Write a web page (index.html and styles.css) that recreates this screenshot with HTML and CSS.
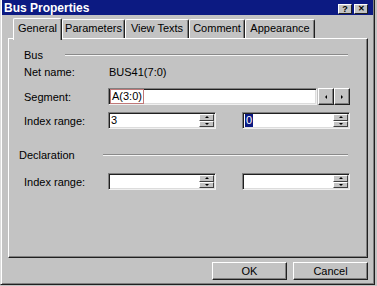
FILE: index.html
```html
<!DOCTYPE html>
<html lang="en">

<head>
    <meta charset="UTF-8">
    <title>Bus Properties</title>
    <link rel="stylesheet" href="styles.css">
</head>

<body>
    <div class="window">
        <div class="titlebar">
            <span class="title">Bus Properties</span>
            <div class="caption-buttons">
                <span class="caption-btn">?</span>
                <span class="caption-btn close">&#x2715;</span>
            </div>
        </div>

        <div class="content">
            <div class="tabs">
                <div class="tab active w-general">General</div>
                <div class="tab w-params">Parameters</div>
                <div class="tab w-texts">View Texts</div>
                <div class="tab w-comment">Comment</div>
                <div class="tab w-appear">Appearance</div>
            </div>

            <div class="panel">
                <div class="group group-bus">
                    <span>Bus</span>
                    <div class="etch"></div>
                </div>

                <div class="row row-net">
                    <span class="label">Net name:</span>
                    <span class="value">BUS41(7:0)</span>
                </div>

                <div class="row row-segment">
                    <span class="label">Segment:</span>
                    <div class="field field-wide"><span class="focus">A(3:0)</span></div>
                    <div class="arrow-btn"><span class="tri tri-left"></span></div>
                    <div class="arrow-btn"><span class="tri tri-right"></span></div>
                </div>

                <div class="row row-index">
                    <span class="label">Index range:</span>
                    <div class="field field-spin">
                        <span class="text">3</span>
                        <div class="spin"><span class="spin-up"></span><span class="spin-down"></span></div>
                    </div>
                    <div class="field field-spin second">
                        <span class="text selected">0</span>
                        <div class="spin"><span class="spin-up"></span><span class="spin-down"></span></div>
                    </div>
                </div>

                <div class="group group-decl">
                    <span>Declaration</span>
                    <div class="etch"></div>
                </div>

                <div class="row row-index2">
                    <span class="label">Index range:</span>
                    <div class="field field-spin">
                        <span class="text"></span>
                        <div class="spin"><span class="spin-up"></span><span class="spin-down"></span></div>
                    </div>
                    <div class="field field-spin second">
                        <span class="text"></span>
                        <div class="spin"><span class="spin-up"></span><span class="spin-down"></span></div>
                    </div>
                </div>
            </div>

            <div class="actions">
                <button class="btn">OK</button>
                <button class="btn">Cancel</button>
            </div>
        </div>
    </div>
</body>

</html>
```

FILE: styles.css
```css
* {
    margin: 0;
    padding: 0;
    box-sizing: border-box;
    font-family: 'Liberation Sans', Arial, sans-serif;
}

body {
    width: 377px;
    height: 286px;
    background: #c3c3c3;
    overflow: hidden;
}

/* outer dialog frame */
.window {
    width: 375px;
    height: 285px;
    background: #c3c3c3;
    border-left: 1px solid #dcdcdc;
    border-right: 1px solid #202020;
    border-bottom: 1px solid #202020;
    box-shadow: inset 1px 0 #fff, inset -1px -1px #808080;
    padding: 0 1px;
}

.titlebar {
    height: 15px;
    background: #0c1a82;
    display: flex;
    align-items: center;
    justify-content: space-between;
    padding: 0 5px 0 2px;
}

.title {
    color: #fff;
    font-weight: bold;
    font-size: 12px;
}

.caption-buttons {
    display: flex;
    gap: 2px;
    margin-top: 2px;
}

.caption-btn {
    width: 14px;
    height: 10px;
    background: #c3c3c3;
    border: 1px solid;
    border-color: #fff #202020 #202020 #fff;
    font-size: 9px;
    font-weight: bold;
    line-height: 8px;
    text-align: center;
    color: #000;
}

.caption-btn.close {
    font-size: 8px;
}

.content {
    padding: 0 5px 0 6px;
}

/* tab strip */
.tabs {
    display: flex;
    height: 23px;
    align-items: flex-end;
    padding-left: 5px;
    position: relative;
    z-index: 1;
}

.tab {
    height: 19px;
    font-size: 11px;
    line-height: 17px;
    text-align: center;
    color: #000;
    border-top: 1px solid #fff;
    border-left: 1px solid #fff;
    border-right: 1px solid #202020;
    box-shadow: inset -1px 0 #808080;
    border-radius: 2px 2px 0 0;
}

.tab.active {
    height: 22px;
    margin-bottom: -2px;
    line-height: 19px;
    background: #c3c3c3;
    padding-bottom: 2px;
}

.w-general { width: 49px; }
.w-params { width: 63px; }
.w-texts { width: 64px; }
.w-comment { width: 56px; }
.w-appear { width: 70px; }

.panel {
    width: 360px;
    height: 220px;
    border: 1px solid;
    border-color: #fff #202020 #202020 #fff;
    box-shadow: inset -1px -1px #808080;
    padding: 0 0 0 15px;
    font-size: 11px;
    color: #000;
}

.group {
    display: flex;
    align-items: center;
    height: 13px;
    font-size: 11px;
}

.group-bus {
    margin-top: 9px;
}

.group-bus .etch {
    margin-left: 22px;
    width: 283px;
}

.group-decl {
    margin-top: 19px;
    margin-left: -5px;
}

.group-decl .etch {
    margin-left: 28px;
    width: 245px;
}

.etch {
    height: 2px;
    border-top: 1px solid #8a8a8a;
    border-bottom: 1px solid #f4f4f4;
    margin-top: 1px;
}

.row {
    display: flex;
    align-items: center;
    height: 17px;
}

.row-net {
    margin-top: 4px;
    height: 14px;
}

.row-segment {
    margin-top: 9px;
}

.row-index {
    margin-top: 7px;
}

.row-index2 {
    margin-top: 12px;
}

.label {
    width: 84px;
    flex-shrink: 0;
}

.value {
    padding-left: 1px;
}

/* sunken edit boxes */
.field {
    height: 17px;
    background: #fff;
    border: 1px solid;
    border-color: #808080 #f0f0f0 #f0f0f0 #808080;
    box-shadow: inset 1px 1px #202020, inset -1px -1px #dcdcdc;
    display: flex;
    align-items: center;
    padding-left: 2px;
    position: relative;
}

.field-wide {
    width: 209px;
}

.focus {
    border: 1px solid #c07878;
    padding: 0 1px;
    line-height: 13px;
    height: 15px;
    margin-left: -1px;
}

.arrow-btn {
    width: 16px;
    height: 17px;
    background: #c3c3c3;
    border: 1px solid;
    border-color: #fff #202020 #202020 #fff;
    box-shadow: inset -1px -1px #808080;
    display: flex;
    align-items: center;
    justify-content: center;
}

.field-wide + .arrow-btn {
    margin-left: 1px;
}

.tri {
    width: 0;
    height: 0;
    border-top: 2px solid transparent;
    border-bottom: 2px solid transparent;
}

.tri-left {
    border-right: 2px solid #000;
}

.tri-right {
    border-left: 2px solid #000;
}

.field-spin {
    width: 108px;
}

.field-spin.second {
    margin-left: 26px;
}

.text {
    line-height: 13px;
}

.selected {
    background: #0c1a82;
    color: #fff;
    padding: 0 1px;
}

.spin {
    position: absolute;
    right: 1px;
    top: 1px;
    width: 15px;
    height: 13px;
    display: flex;
    flex-direction: column;
}

.spin-up,
.spin-down {
    flex: 1;
    background: #c3c3c3;
    border: 1px solid;
    border-color: #fff #404040 #404040 #fff;
    position: relative;
}

.spin-up::after,
.spin-down::after {
    content: "";
    position: absolute;
    left: 5px;
    top: 1px;
    width: 0;
    height: 0;
    border-left: 2px solid transparent;
    border-right: 2px solid transparent;
}

.spin-up::after {
    border-bottom: 2px solid #000;
}

.spin-down::after {
    border-top: 2px solid #000;
}

.actions {
    display: flex;
    justify-content: flex-end;
    gap: 6px;
    margin-top: 4px;
    width: 360px;
}

.btn {
    width: 75px;
    height: 18px;
    background: #c3c3c3;
    border: 1px solid;
    border-color: #fff #202020 #202020 #fff;
    box-shadow: inset -1px -1px #808080;
    font-size: 11px;
    color: #000;
}
```
